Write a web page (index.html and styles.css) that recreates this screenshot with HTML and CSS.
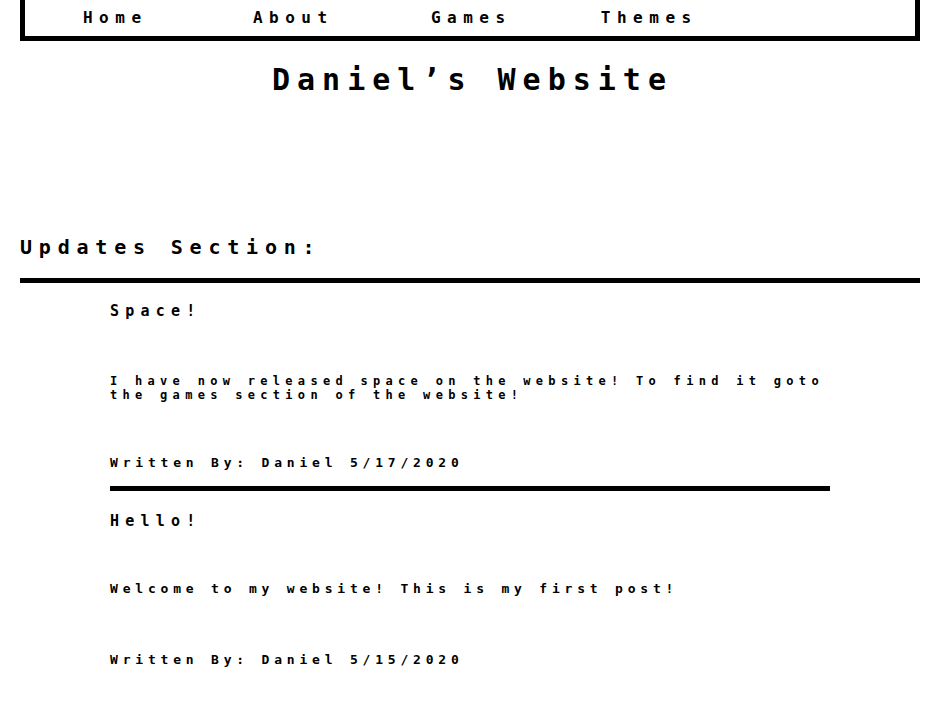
FILE: index.html
```html
<!DOCTYPE html>
<html lang="en">
<head>
<meta charset="utf-8">
<title>Daniel's Website</title>
<link rel="stylesheet" href="styles.css">
</head>
<body>
<div class="page">
  <nav class="nav">
    <a class="nav-item" href="#"><span class="nav-link">Home</span></a>
    <a class="nav-item" href="#"><span class="nav-link">About</span></a>
    <a class="nav-item" href="#"><span class="nav-link">Games</span></a>
    <a class="nav-item" href="#"><span class="nav-link">Themes</span></a>
  </nav>
  <h1 class="site-title"><span class="title-text">Daniel’s Website</span></h1>
  <h2 class="section-title">Updates Section:</h2>
  <div class="rule-wide"></div>
  <section class="posts">
    <article class="post">
      <h3 class="post-title">Space!</h3>
      <p class="post-body">I have now released space on the website! To find it goto the games section of the website!</p>
      <p class="post-author">Written By: Daniel 5/17/2020</p>
    </article>
    <div class="rule-post"></div>
    <article class="post post-second">
      <h3 class="post-title">Hello!</h3>
      <p class="post-body">Welcome to my website! This is my first post!</p>
      <p class="post-author">Written By: Daniel 5/15/2020</p>
    </article>
  </section>
</div>
</body>
</html>
```
FILE: styles.css
```css
html, body {
  margin: 0;
  padding: 0;
  background: #ffffff;
  color: #000000;
}

body {
  font-family: "DejaVu Sans Mono", "Liberation Mono", monospace;
  font-weight: bold;
}

.page {
  width: 900px;
  margin-left: 20px;
  display: flex;
  flex-direction: column;
}

.nav {
  display: flex;
  height: 36px;
  border: 5px solid #000;
  border-top: none;
}

.nav-item {
  width: 178px;
  display: flex;
  align-items: center;
  justify-content: center;
  color: #000;
  text-decoration: none;
  font-size: 16px;
  letter-spacing: 6.5px;
  line-height: 36px;
}

.nav-link {
  margin-right: -2.5px;
}

.site-title {
  margin: 20.6px 0 0;
  text-align: center;
  font-size: 30px;
  line-height: 36px;
  letter-spacing: 7px;
  font-weight: bold;
}

.title-text {
  margin-right: -5px;
}

.section-title {
  margin: 137px 0 0;
  font-size: 20px;
  line-height: 24px;
  letter-spacing: 6.8px;
  font-weight: bold;
}

.rule-wide {
  height: 5px;
  margin-top: 19px;
  background: #000;
}

.posts {
  padding-left: 90px;
  display: flex;
  flex-direction: column;
}

.post {
  width: 720px;
  display: flex;
  flex-direction: column;
}

.post-title {
  margin: 19px 0 0;
  font-size: 15px;
  line-height: 18px;
  letter-spacing: 6.2px;
  font-weight: bold;
}

.post-body {
  margin: 54px 0 0;
  font-size: 12px;
  line-height: 14px;
  letter-spacing: 5.3px;
}

.post-author {
  margin: 53.6px 0 0;
  font-size: 13px;
  line-height: 16px;
  letter-spacing: 4.8px;
}

.rule-post {
  width: 720px;
  height: 5px;
  margin-top: 14.5px;
  background: #000;
}

.post-second .post-title {
  margin-top: 21.8px;
}

.post-second .post-body {
  margin-top: 50.7px;
  font-size: 13px;
  line-height: 16px;
  letter-spacing: 4.8px;
}

.post-second .post-author {
  margin-top: 55px;
}
```
